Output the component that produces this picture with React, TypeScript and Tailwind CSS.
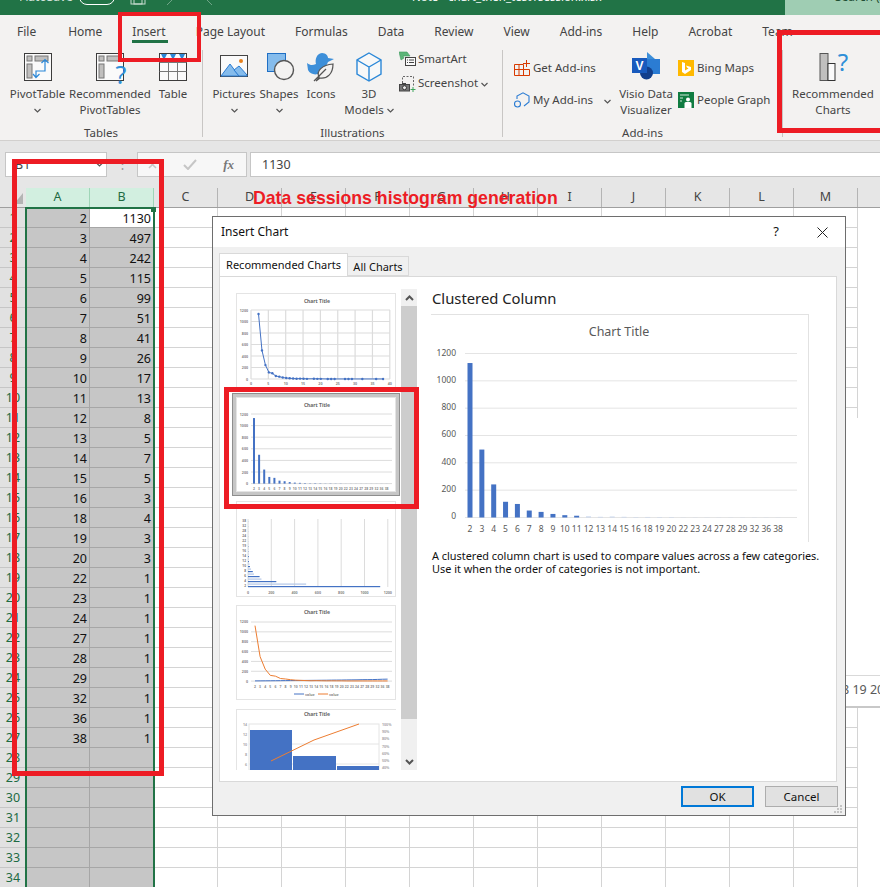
const rows: [number, number][] = [
  [2, 1130], [3, 497], [4, 242], [5, 115], [6, 99], [7, 51], [8, 41], [9, 26], [10, 17], [11, 13],
  [12, 8], [13, 5], [14, 7], [15, 5], [16, 3], [18, 4], [19, 3], [20, 3], [22, 1], [23, 1],
  [24, 1], [27, 1], [28, 1], [29, 1], [32, 1], [36, 1], [38, 1],
];

const tabs = ['File', 'Home', 'Insert', 'Page Layout', 'Formulas', 'Data', 'Review', 'View', 'Add-ins', 'Help', 'Acrobat', 'Team'];
const columns = ['C', 'D', 'E', 'F', 'G', 'H', 'I', 'J', 'K', 'L', 'M'];

function Chevron() {
  return (
    <svg width="7" height="5" viewBox="0 0 7 5" className="inline-block">
      <path d="M0.5 1 L3.5 4 L6.5 1" fill="none" stroke="#555" strokeWidth="1.2" />
    </svg>
  );
}

function PivotBase({ children }: { children?: React.ReactNode }) {
  return (
    <svg width="34" height="30" viewBox="0 0 34 30" className="overflow-visible">
      <rect x="3.5" y="1.5" width="27" height="27" fill="#fafafa" stroke="#3c3c3c" />
      <rect x="6" y="4" width="5" height="5" fill="#c0bfbe" stroke="#777" />
      <rect x="14" y="4" width="13" height="5" fill="#c0bfbe" stroke="#777" />
      <rect x="6" y="12" width="5" height="14" fill="#c0bfbe" stroke="#777" />
      {children}
    </svg>
  );
}

function TableIcon() {
  return (
    <svg width="30" height="30" viewBox="0 0 30 30">
      <rect x="1.5" y="1.5" width="27" height="27" fill="#fafafa" stroke="#3c3c3c" />
      <path d="M1.5 10.5H28.5M1.5 19.5H28.5M10.5 10V28M19.5 10V28" stroke="#777" />
      <path d="M3 2h6l-3 6zM12 2h6l-3 6zM21 2h6l-3 6z" fill="#2b88d8" />
    </svg>
  );
}

function PicturesIcon() {
  return (
    <svg width="30" height="30" viewBox="0 0 30 30">
      <rect x="1.5" y="3.5" width="27" height="21" fill="#fafafa" stroke="#444" />
      <path d="M2 24 L11 12 L20 24Z" fill="#85bcec" stroke="#2b7cd3" />
      <path d="M15 18 L20 14 L28 23 V24 H20Z" fill="#85bcec" stroke="#2b7cd3" />
      <circle cx="22" cy="9" r="2" fill="#e8801a" />
    </svg>
  );
}

function ShapesIcon() {
  return (
    <svg width="32" height="30" viewBox="0 0 32 30">
      <rect x="4.5" y="1.5" width="18" height="18" fill="#85bcec" stroke="#1f6fc4" />
      <circle cx="21" cy="18" r="9.5" fill="#f3f2f1" stroke="#555" strokeWidth="1.4" />
    </svg>
  );
}

function DuckIcon() {
  return (
    <svg width="30" height="30" viewBox="0 0 30 30">
      <path d="M1 11 C5 14 7 13 10 12 C9 8 10 2 16 1 C20 1 22 4 22 6 L28 7 L22 10 C21 13 19 15 18 17 C14 24 5 24 2 18 Z" fill="#3d8fd9" />
      <path d="M10 29 L13 25 C10 19 16 13 27 12 C27 22 21 27 14 26 Z" fill="#f3f2f1" stroke="#555" strokeWidth="1.2" />
      <path d="M8 29 L20 17" stroke="#555" strokeWidth="1.2" />
    </svg>
  );
}

function CubeIcon() {
  return (
    <svg width="28" height="30" viewBox="0 0 28 30">
      <path d="M14 1 L26 8 V22 L14 29 L2 22 V8Z" fill="#f8f8f8" stroke="#2b88d8" strokeWidth="1.4" />
      <path d="M2 8 L14 15 L26 8 M14 15 V29" fill="none" stroke="#2b88d8" strokeWidth="1.4" />
    </svg>
  );
}

function SmartArtIcon() {
  return (
    <svg width="17" height="17" viewBox="0 0 17 17">
      <path d="M0 1 H8 L11 5 H4 L5 7 L2 9 Z" fill="#5cb578" stroke="#3e9b5e" strokeWidth="0.6" />
      <rect x="6.5" y="6.5" width="10" height="8" fill="#fafafa" stroke="#444" />
      <path d="M8 9h1M10 9h5M8 11.5h1M10 11.5h5" stroke="#444" />
    </svg>
  );
}

function ScreenshotIcon() {
  return (
    <svg width="17" height="17" viewBox="0 0 17 17">
      <path d="M3.5 8V1.5H14.5V11" fill="none" stroke="#666" strokeDasharray="2 1.5" />
      <rect x="0.5" y="9.5" width="10" height="6.5" fill="#777" stroke="#444" />
      <rect x="3" y="8" width="4" height="2" fill="#444" />
      <circle cx="5.5" cy="12.7" r="2" fill="#eee" stroke="#333" />
      <path d="M14 12v5M11.5 14.5h5" stroke="#3ea55c" />
    </svg>
  );
}

function GetAddInsIcon() {
  return (
    <svg width="16" height="16" viewBox="0 0 16 16">
      <path d="M0.5 4.5H9.5V9.5H15.5V15.5H0.5ZM0.5 9.5H9.5M9.5 9.5V15.5M5 4.5V15.5" fill="none" stroke="#d83b01" />
      <path d="M12.5 0V7M9 3.5H16" stroke="#d83b01" />
    </svg>
  );
}

function MyAddInsIcon() {
  return (
    <svg width="16" height="16" viewBox="0 0 16 16">
      <path d="M3 7 V4 L9 0.8 L15 4 V10 L10 14" fill="none" stroke="#2b7cd3" strokeWidth="1.1" />
      <circle cx="3.5" cy="12" r="3" fill="#f3f2f1" stroke="#2b7cd3" strokeWidth="1.1" />
    </svg>
  );
}

function VisioIcon() {
  return (
    <svg width="30" height="30" viewBox="0 0 30 30">
      <path d="M16 0 L24 7 L16 14Z" fill="#3d8fd9" />
      <rect x="14" y="7" width="15" height="15" fill="#2b7cd3" />
      <circle cx="15.5" cy="21" r="6.5" fill="#123f8c" />
      <rect x="1" y="6" width="15" height="15" fill="#185abd" />
      <text x="8.5" y="18" textAnchor="middle" fontSize="12" fontWeight="700" fill="#fff" fontFamily="Liberation Sans">V</text>
    </svg>
  );
}

function BingIcon() {
  return (
    <svg width="16" height="16" viewBox="0 0 16 16">
      <rect width="16" height="16" fill="#ffb900" />
      <path d="M4 2 L7 3 V10.5 L10.5 8.5 L9 7.5 L8 5.5 L13 7 V10 L7 14 L4 12Z" fill="#fff" />
    </svg>
  );
}

function PeopleIcon() {
  return (
    <svg width="16" height="16" viewBox="0 0 16 16">
      <rect width="16" height="16" fill="#107c41" />
      <path d="M2 3H11M2 6H5M2 9H4" stroke="#cfe8da" />
      <circle cx="10" cy="7.5" r="2" fill="#fff" />
      <path d="M6.5 16 V11.5 Q6.5 10 8 10 H12 Q13.5 10 13.5 11.5 V16Z" fill="#fff" />
    </svg>
  );
}

function RecommendedChartsIcon() {
  return (
    <svg width="32" height="30" viewBox="0 0 32 30" className="ml-[4px] overflow-visible">
      <rect x="1" y="1.5" width="8" height="27" fill="#c0bfbe" stroke="#555" />
      <rect x="9" y="11.5" width="7" height="17" fill="#fafafa" stroke="#333" />
      <text x="24" y="19" textAnchor="middle" fontSize="24" fill="#2e8fd8" fontFamily="Noto Sans">?</text>
    </svg>
  );
}

function Large({ w, icon, lines, chevron, inlineChevron }: { w: string; icon: React.ReactNode; lines: string[]; chevron?: boolean; inlineChevron?: boolean }) {
  return (
    <div className={`${w} flex shrink-0 flex-col items-center`}>
      <div className="flex h-[30px] items-center justify-center">{icon}</div>
      <div className="mt-[4px] text-center leading-[16px] whitespace-nowrap">
        {lines.map((line, i) => (
          <div key={line} className="flex h-[16px] items-center justify-center">
            {line}
            {inlineChevron && i === lines.length - 1 && <span className="ml-[3px] flex items-center"><Chevron /></span>}
          </div>
        ))}
        {chevron && <div className="flex h-[16px] items-center justify-center"><Chevron /></div>}
      </div>
    </div>
  );
}

function Small({ icon, label, chevron, className }: { icon: React.ReactNode; label: string; chevron?: boolean; className?: string }) {
  return (
    <div className={`flex h-[18px] items-center whitespace-nowrap ${className ?? ''}`}>
      <div className="flex w-[19px] shrink-0 items-center">{icon}</div>
      <span>{label}</span>
      {chevron && <span className="ml-[3px]"><Chevron /></span>}
    </div>
  );
}

function Group({ w, label, children }: { w: string; label: string; children: React.ReactNode }) {
  return (
    <div className={`${w} flex h-[87px] shrink-0 flex-col border-r border-[#c8c6c4]`}>
      <div className="flex h-[75px] shrink-0 items-start">{children}</div>
      <div className="h-[12px] text-center leading-[16px]">{label}</div>
    </div>
  );
}

function Ribbon() {
  return (
    <div className="h-[96px] border-b border-[#d2d0ce] bg-[#f3f2f1] pt-[5px] text-[11.5px] text-[#444]">
      <div className="flex">
        <Group w="w-[203px]" label="Tables">
          <div className="flex w-full pt-[2px] pl-[6px]">
            <Large w="w-[63px]" icon={<PivotBase><path d="M15 25 V19 H24 V8 M20.5 11 L24 7.5 L27.5 11 M12 22 L15 25.5 L18.5 22" fill="none" stroke="#2b88d8" strokeWidth="1.2" /></PivotBase>} lines={['PivotTable']} chevron />
            <Large w="w-[82px]" icon={<PivotBase><text x="28" y="32" textAnchor="middle" fontSize="25" fill="#2e8fd8" fontFamily="Noto Sans">?</text></PivotBase>} lines={['Recommended', 'PivotTables']} />
            <Large w="w-[44px]" icon={<TableIcon />} lines={['Table']} />
          </div>
        </Group>
        <Group w="w-[300px]" label="Illustrations">
          <div className="flex w-full pt-[2px] pl-[5px]">
            <Large w="w-[52px]" icon={<PicturesIcon />} lines={['Pictures']} chevron />
            <Large w="w-[38px]" icon={<ShapesIcon />} lines={['Shapes']} chevron />
            <Large w="w-[46px]" icon={<DuckIcon />} lines={['Icons']} />
            <Large w="w-[50px]" icon={<CubeIcon />} lines={['3D', 'Models']} inlineChevron />
            <div className="-mt-[2px] ml-[5px] flex flex-col gap-[6px]">
              <Small icon={<SmartArtIcon />} label="SmartArt" />
              <Small icon={<ScreenshotIcon />} label="Screenshot" chevron />
            </div>
          </div>
        </Group>
        <Group w="w-[280px]" label="Add-ins">
          <div className="flex w-full pt-[2px] pl-[11px]">
            <div className="flex w-[104px] shrink-0 flex-col gap-[14px] pt-[7px]">
              <Small icon={<GetAddInsIcon />} label="Get Add-ins" />
              <div className="flex items-center">
                <Small icon={<MyAddInsIcon />} label="My Add-ins" />
                <span className="ml-[11px]"><Chevron /></span>
              </div>
            </div>
            <Large w="w-[56px]" icon={<VisioIcon />} lines={['Visio Data', 'Visualizer']} />
            <div className="ml-[4px] flex flex-col gap-[14px] pt-[7px]">
              <Small icon={<BingIcon />} label="Bing Maps" />
              <Small icon={<PeopleIcon />} label="People Graph" />
            </div>
          </div>
        </Group>
        <div className="flex-1 pt-[2px] pl-[3px]">
          <Large w="w-[94px]" icon={<RecommendedChartsIcon />} lines={['Recommended', 'Charts']} />
        </div>
      </div>
    </div>
  );
}

function FormulaBar() {
  return (
    <div className="flex h-[47px] items-start gap-0 bg-[#e6e6e6] pt-[11px] pl-[5px] text-[12.5px] text-[#444]">
      <div className="flex h-[25px] w-[102px] items-center justify-between border border-[#c6c6c6] bg-white pr-[3px] pl-[9px]">
        <span className="pt-[2px]">B1</span>
        <Chevron />
      </div>
      <div className="flex h-[25px] w-[30px] items-center justify-center text-[#9a9a9a]">⋮</div>
      <div className="flex h-[25px] w-[110px] items-center justify-between border border-[#c6c6c6] bg-[#f7f7f7] pr-[12px] pl-[10px]">
        <svg width="9" height="9" viewBox="0 0 9 9"><path d="M1 1 L8 8 M8 1 L1 8" stroke="#c6c6c6" strokeWidth="1.6" /></svg>
        <svg width="14" height="11" viewBox="0 0 14 11"><path d="M1 6 L5 10 L13 1" fill="none" stroke="#c6c6c6" strokeWidth="2" /></svg>
        <span className="font-['Liberation_Serif',serif] text-[13px] font-bold text-[#777] italic">fx</span>
      </div>
      <div className="ml-[3px] flex h-[25px] flex-1 items-center border border-r-0 border-[#c6c6c6] bg-white pt-[2px] pl-[11px] text-[#444]">1130</div>
    </div>
  );
}

function Sheet() {
  return (
    <div className="relative h-[699px] overflow-hidden bg-white text-[12.5px]">
      <div className="flex h-[20px] border-b border-[#9f9f9f] bg-[#e6e6e6] text-[#444]">
        <div className="flex w-[26px] shrink-0 items-end justify-end pr-[3px] pb-[3px]">
          <svg width="9" height="11" viewBox="0 0 9 11"><path d="M9 0 V11 H0 Z" fill="#b4b4b4" /></svg>
        </div>
        {['A', 'B'].map((col) => (
          <div key={col} className="flex w-[64px] shrink-0 items-center justify-center border-r border-[#9fd5b7] bg-[#d2efe0] text-[#1e6b43]">{col}</div>
        ))}
        {columns.map((col) => (
          <div key={col} className="flex w-[64px] shrink-0 items-center justify-center border-r border-[#b4b4b4]">{col}</div>
        ))}
      </div>
      {Array.from({ length: 34 }, (_, i) => {
        const row = rows[i];
        return (
          <div key={i} className="flex h-[20px]">
            <div className="flex w-[26px] shrink-0 items-center justify-center border-b border-[#c6c6c6] bg-[#e1e1e1] pt-[2px] text-[#1e6b43]">{i + 1}</div>
            <div className="flex w-[64px] shrink-0 items-center justify-end border-r border-b border-[#a6a6a6] bg-[#c6c6c6] pt-[4px] pr-[2px] text-[#111]">{row?.[0]}</div>
            <div className={`flex w-[64px] shrink-0 items-center justify-end border-r border-b border-[#a6a6a6] pt-[4px] pr-[2px] text-[#111] ${i === 0 ? 'bg-white' : 'bg-[#c6c6c6]'}`}>{row?.[1]}</div>
            {columns.map((col) => (
              <div key={col} className="w-[64px] shrink-0 border-r border-b border-[#d4d4d4]" />
            ))}
          </div>
        );
      })}

      {/* selection outline */}
      <div className="absolute top-[19px] left-[25px] h-[680px] w-[130px] border-t-[2px] border-r-[2px] border-l-[2px] border-[#217346]" />
      <div className="absolute top-[19px] left-[151px] h-[5px] w-[5px] bg-[#217346]" />

      {/* chart object behind the dialog */}
      <div className="absolute top-[230px] left-[840px] h-[290px] w-[40px] border-b-[2px] border-[#c8c8c8] bg-white">
        <div className="mt-[257px] h-[31px] border-t border-[#d9d9d9] pt-[5px] pl-[2px] text-[12.5px] whitespace-nowrap text-[#595959]">8 19 20</div>
      </div>
    </div>
  );
}

function MiniTitle({ y }: { y: number }) {
  return <text x="80" y={y} textAnchor="middle" fontSize="5" fontWeight="700" fill="#666" fontFamily="Noto Sans">Chart Title</text>;
}

function MiniLabels({ x, y0, step, count, labels }: { x: number; y0: number; step: number; count: number; labels?: string[] }) {
  return (
    <>
      {Array.from({ length: count }, (_, i) => (
        <text key={i} x={x} y={y0 - i * step + 1.5} textAnchor="end" fontSize="3.6" fontWeight="700" fill="#888" fontFamily="Noto Sans">{labels ? labels[i] : i * 200}</text>
      ))}
    </>
  );
}

function XTicks({ x0, step, y }: { x0: number; step: number; y: number }) {
  return (
    <>
      {rows.map(([cat], i) => (
        <text key={i} x={x0 + i * step} y={y} textAnchor="middle" fontSize="3.4" fontWeight="700" fill="#888" fontFamily="Noto Sans">{cat}</text>
      ))}
    </>
  );
}

function ThumbLine() {
  const pts = rows.map(([c, v]) => [14.6 + c * 3.46, 85 - v * 0.0575]);
  const d = pts.map(([x, y]) => `${x},${y}`).join(' ');
  return (
    <svg width="158" height="93" viewBox="0 0 158 93" className="block">
      <MiniTitle y={9} />
      {[0, 1, 2, 3, 4, 5, 6].map((i) => <line key={i} x1="14" x2="153" y1={16 + i * 11.5} y2={16 + i * 11.5} stroke="#dcdcdc" strokeWidth="1.2" />)}
      {[0, 1, 2, 3, 4, 5, 6, 7, 8].map((i) => <line key={i} y1="16" y2="85" x1={14 + i * 17.35} x2={14 + i * 17.35} stroke="#dcdcdc" strokeWidth="1.2" />)}
      <MiniLabels x={11} y0={85} step={11.5} count={7} />
      {[0, 5, 10, 15, 20, 25, 30, 35, 40].map((v, i) => (
        <text key={v} x={14 + i * 17.35} y="91" textAnchor="middle" fontSize="3.6" fontWeight="700" fill="#888" fontFamily="Noto Sans">{v}</text>
      ))}
      <polyline points={d} fill="none" stroke="#4472c4" strokeWidth="1" />
      {pts.map(([x, y], i) => <circle key={i} cx={x} cy={y} r="1.2" fill="#4472c4" />)}
    </svg>
  );
}

function ThumbColumn() {
  return (
    <svg width="158" height="93" viewBox="0 0 158 93" className="block">
      <MiniTitle y={9} />
      {[0, 1, 2, 3, 4, 5, 6].map((i) => <line key={i} x1="14" x2="155" y1={16 + i * 11.6} y2={16 + i * 11.6} stroke="#dcdcdc" />)}
      <MiniLabels x={11} y0={85.6} step={11.6} count={7} />
      {rows.map(([, v], i) => <rect key={i} x={16 + i * 5.1} y={85.6 - v * 0.058} width="2" height={v * 0.058} fill="#4472c4" />)}
      <XTicks x0={17} step={5.1} y={92} />
    </svg>
  );
}

function ThumbBar() {
  return (
    <svg width="158" height="94" viewBox="0 0 158 94" className="block">
      <MiniTitle y={7} />
      {[0, 1, 2, 3, 4, 5, 6].map((i) => <line key={i} y1="17" y2="85" x1={11 + i * 23.3} x2={11 + i * 23.3} stroke="#dcdcdc" />)}
      {rows.map(([, v], i) => <rect key={i} x={11} y={84 - i * 2.5} width={v * 0.117} height="1.2" fill={i % 2 === 0 ? '#4472c4' : '#b4c7e7'} />)}
      {rows.map(([c], i) => i % 2 === 0 && <text key={c} x="9" y={85 - i * 2.5} textAnchor="end" fontSize="3.2" fontWeight="700" fill="#777" fontFamily="Noto Sans">{c}</text>)}
      {[0, 200, 400, 600, 800, 1000, 1200].map((v, i) => (
        <text key={v} x={11 + i * 23.3} y="92" textAnchor="middle" fontSize="3.6" fontWeight="700" fill="#888" fontFamily="Noto Sans">{v}</text>
      ))}
    </svg>
  );
}

function ThumbCombo() {
  const orange = rows.map(([, v], i) => `${18 + i * 5.1},${75 - v * 0.049}`).join(' ');
  const blue = rows.map(([c], i) => `${18 + i * 5.1},${75 - c * 0.049}`).join(' ');
  return (
    <svg width="158" height="93" viewBox="0 0 158 93" className="block">
      <MiniTitle y={8} />
      {[0, 1, 2, 3, 4, 5, 6].map((i) => <line key={i} x1="14" x2="155" y1={16 + i * 9.85} y2={16 + i * 9.85} stroke="#dcdcdc" />)}
      <MiniLabels x={11} y0={75} step={9.85} count={7} />
      <polyline points={blue} fill="none" stroke="#4472c4" strokeWidth="1" />
      <polyline points={orange} fill="none" stroke="#ed7d31" strokeWidth="1" />
      <XTicks x0={18} step={5.1} y={82} />
      <line x1="57" x2="67" y1="88" y2="88" stroke="#4472c4" />
      <text x="68" y="90" fontSize="3.6" fontWeight="700" fill="#888" fontFamily="Noto Sans">value</text>
      <line x1="81" x2="91" y1="88" y2="88" stroke="#ed7d31" />
      <text x="92" y="90" fontSize="3.6" fontWeight="700" fill="#888" fontFamily="Noto Sans">value</text>
    </svg>
  );
}

function ThumbPareto() {
  return (
    <svg width="158" height="60" viewBox="0 0 158 60" className="block">
      <MiniTitle y={6} />
      <rect x="12" y="14" width="130" height="46" fill="#fff" stroke="#e4e4e4" />
      <line x1="12" x2="142" y1="34" y2="34" stroke="#e4e4e4" />
      <line x1="12" x2="142" y1="54" y2="54" stroke="#e4e4e4" />
      <rect x="13" y="20" width="42" height="40" fill="#4472c4" />
      <rect x="56" y="46" width="43" height="14" fill="#4472c4" />
      <rect x="100" y="56" width="42" height="4" fill="#4472c4" />
      <polyline points="34,51 77,30 122,14" fill="none" stroke="#ed7d31" strokeWidth="1" />
      {['14', '12', '10', '8', '6'].map((l, i) => (
        <text key={l} x="10" y={16 + i * 10} textAnchor="end" fontSize="3.6" fontWeight="700" fill="#aaa" fontFamily="Noto Sans">{l}</text>
      ))}
      {['100%', '90%', '80%', '70%', '60%', '50%', '40%'].map((l, i) => (
        <text key={l} x="145" y={16 + i * 7.2} fontSize="3.6" fontWeight="700" fill="#aaa" fontFamily="Noto Sans">{l}</text>
      ))}
    </svg>
  );
}

function PreviewChart() {
  const ticks = [1200, 1000, 800, 600, 400, 200, 0];
  return (
    <svg width="377" height="227" viewBox="0 0 377 227" className="block" fontFamily="Noto Sans">
      <text x="188" y="21" textAnchor="middle" fontSize="12.5" fill="#595959">Chart Title</text>
      {ticks.map((t, i) => (
        <g key={t}>
          <line x1="34" x2="366" y1={38.5 + i * 27.33} y2={38.5 + i * 27.33} stroke="#e4e4e4" />
          <text x="25" y={40.5 + i * 27.33} textAnchor="end" fontSize="8.5" fill="#595959">{t}</text>
        </g>
      ))}
      {rows.map(([cat, v], i) => {
        const h = v * 0.1367;
        const x = 39 + i * 11.85;
        return (
          <g key={cat}>
            <rect x={x - 2.5} y={202.5 - h} width="5" height={h} fill={v < 10 ? '#c5d3ec' : '#4472c4'} />
            <text x={x} y="217" textAnchor="middle" fontSize="8.5" fill="#595959">{cat}</text>
          </g>
        );
      })}
    </svg>
  );
}

function Dialog() {
  return (
    <div className="absolute top-[216px] left-[212px] flex h-[600px] w-[634px] flex-col border border-[#6e6e6e] bg-[#f0f0f0] text-[#111]">
      <div className="flex h-[30px] items-center justify-between bg-white pr-[17px] pl-[8px] text-[12px]">
        <span>Insert Chart</span>
        <div className="flex items-center gap-[38px]">
          <span className="text-[13px]">?</span>
          <svg width="11" height="11" viewBox="0 0 11 11"><path d="M0.5 0.5 L10.5 10.5 M10.5 0.5 L0.5 10.5" stroke="#222" /></svg>
        </div>
      </div>
      <div className="flex h-[29px] items-end pl-[6px] text-[11px]">
        <div className="z-10 flex h-[23px] w-[129px] items-center justify-center border border-b-0 border-[#d9d9d9] bg-white">Recommended Charts</div>
        <div className="flex h-[20px] w-[61px] items-center justify-center border border-l-0 border-[#d9d9d9] bg-[#f0f0f0] pt-[2px]">All Charts</div>
      </div>
      <div className="mr-[8px] ml-[6px] flex h-[506px] gap-[15px] border border-[#d9d9d9] bg-white pt-[12px] pl-[12px]">
        <div className="flex h-[481px] shrink-0">
          <div className="h-[481px] w-[169px] shrink-0 overflow-hidden">
            <div className="mt-[4px] ml-[4px] w-[160px] border border-[#e4e4e4]"><ThumbLine /></div>
            <div className="mt-[5px] w-[168px] border border-[#8e8e8e] bg-[#c6c6c6] p-[3px]">
              <div className="border border-[#e4e4e4] bg-white"><ThumbColumn /></div>
            </div>
            <div className="mt-[5px] ml-[4px] w-[160px] border border-[#e4e4e4]"><ThumbBar /></div>
            <div className="mt-[8px] ml-[4px] w-[160px] border border-[#e4e4e4]"><ThumbCombo /></div>
            <div className="mt-[9px] ml-[4px] w-[160px] border-t border-l border-[#e4e4e4]"><ThumbPareto /></div>
          </div>
          <div className="flex w-[16px] flex-col bg-[#f0f0f0]">
            <div className="flex h-[17px] items-center justify-center">
              <svg width="9" height="6" viewBox="0 0 9 6"><path d="M1 5 L4.5 1.5 L8 5" fill="none" stroke="#555" strokeWidth="2" /></svg>
            </div>
            <div className="h-[413px] bg-[#cdcdcd]" />
            <div className="flex-1" />
            <div className="flex h-[17px] items-center justify-center">
              <svg width="9" height="6" viewBox="0 0 9 6"><path d="M1 1 L4.5 4.5 L8 1" fill="none" stroke="#555" strokeWidth="2" /></svg>
            </div>
          </div>
        </div>
        <div className="flex-1">
          <div className="-mt-[1px] h-[26px] text-[14.8px] leading-[20px] text-[#222]">Clustered Column</div>
          <div className="-ml-[1px] w-[378px] border-t border-r border-[#e2e2e2]"><PreviewChart /></div>
          <p className="mt-[7px] w-[400px] text-[10.9px] leading-[13px] whitespace-nowrap text-[#111]">
            A clustered column chart is used to compare values across a few categories.
            <br />
            Use it when the order of categories is not important.
          </p>
        </div>
      </div>
      <div className="relative flex flex-1 items-start justify-end gap-[11px] pt-[4px] pr-[7px] text-[11.5px]">
        <button className="h-[21px] w-[73px] border-2 border-[#0078d7] bg-[#e1e1e1]">OK</button>
        <button className="h-[21px] w-[73px] border border-[#adadad] bg-[#e1e1e1]">Cancel</button>
        <svg width="9" height="9" viewBox="0 0 9 9" className="absolute right-[2px] bottom-[1px]">
          <path d="M6 0h2v2H6zM3 3h2v2H3zM6 3h2v2H6zM0 6h2v2H0zM3 6h2v2H3zM6 6h2v2H6z" fill="#c4c4c4" />
        </svg>
      </div>
    </div>
  );
}

export default function App() {
  return (
    <div className="relative h-[887px] w-[880px] overflow-hidden bg-white font-['Noto_Sans',sans-serif]">
      <div className="relative h-[15px] overflow-hidden bg-[#217346] text-[12px] whitespace-nowrap text-white">
        <div className="-mt-[12px] flex items-center pl-[20px]">
          <span className="w-[59px] opacity-80">AutoSave</span>
          <span className="h-[16px] w-[36px] rounded-full border border-white" />
          <svg width="16" height="16" viewBox="0 0 16 16" className="ml-[15px]"><rect x="1" y="1" width="14" height="14" fill="none" stroke="#c8dccf" /><rect x="4" y="9" width="8" height="6" fill="none" stroke="#c8dccf" /></svg>
          <svg width="50" height="16" viewBox="0 0 50 16" className="ml-[18px]"><path d="M2 17 L9 10 M42 10 L49 17" stroke="#6fa487" /></svg>
          <span className="ml-[198px] text-[11.5px]">Note - chart_then_test1session.xlsx</span>
        </div>
        <div className="absolute top-0 right-0 h-[15px] w-[95px] bg-[#9fcdb3] pl-[50px] text-[#1f4e33]">
          <span className="-mt-[12px] block">Search (Alt</span>
        </div>
      </div>
      <div className="flex h-[30px] items-center gap-[30px] bg-[#f3f2f1] pt-[3px] pl-[17px] text-[12px] whitespace-nowrap text-[#444]">
        {tabs.map((tab) => (
          <div key={tab} className={tab === 'File' ? 'relative mr-[2px]' : 'relative'}>
            {tab}
            {tab === 'Insert' && <div className="absolute top-[17px] left-0 h-[3px] w-[36px] bg-[#217346]" />}
          </div>
        ))}
      </div>
      <Ribbon />
      <FormulaBar />
      <Sheet />
      <Dialog />

      {/* red annotations drawn over the screenshot */}
      <div className="absolute top-[188px] left-[253px] font-['Liberation_Sans',sans-serif] text-[17.7px] leading-[21px] font-bold whitespace-nowrap text-[#ed1c24]">Data sessions histogram generation</div>
      <div className="absolute top-[12px] left-[118px] h-[50px] w-[83px] border-[4px] border-[#ed1c24]" />
      <div className="absolute top-[30px] left-[777px] h-[103px] w-[120px] border-[5px] border-[#ed1c24]" />
      <div className="absolute top-[159px] left-[12px] h-[617px] w-[152px] border-[5px] border-[#ed1c24]" />
      <div className="absolute top-[387px] left-[224px] h-[122px] w-[195px] border-[5px] border-[#ed1c24]" />
    </div>
  );
}
